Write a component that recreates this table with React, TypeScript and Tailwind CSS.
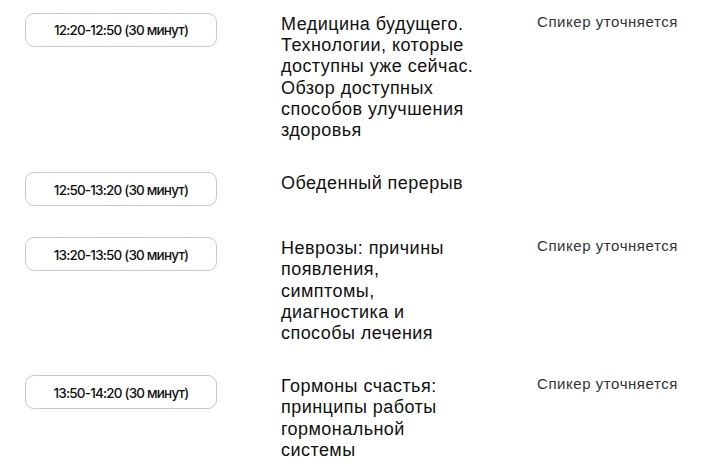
import React from "react";

type Row = { time: string; title: string; speaker?: string };

const rows: Row[] = [
  {
    time: "12:20-12:50 (30 минут)",
    title: "Медицина будущего. Технологии, которые доступны уже сейчас. Обзор доступных способов улучшения здоровья",
    speaker: "Спикер уточняется",
  },
  { time: "12:50-13:20 (30 минут)", title: "Обеденный перерыв" },
  {
    time: "13:20-13:50 (30 минут)",
    title: "Неврозы: причины появления, симптомы, диагностика и способы лечения",
    speaker: "Спикер уточняется",
  },
  {
    time: "13:50-14:20 (30 минут)",
    title: "Гормоны счастья: принципы работы гормональной системы",
    speaker: "Спикер уточняется",
  },
];

export default function App() {
  return (
    <div className="w-[719px] h-[476px] overflow-hidden bg-white pt-[13px] pl-[25px]">
      <div className="flex flex-col gap-[31px]">
        {rows.map((r) => (
          <div key={r.time} className="flex items-start">
            <div
              className="w-[192px] h-[34px] shrink-0 rounded-[9px] border border-[#c9c9c9] flex items-center justify-center text-[13.5px] font-medium tracking-[-0.06em] text-[#111] pt-px"
              style={{ fontFamily: "Inter, 'Noto Sans', sans-serif" }}
            >
              {r.time}
            </div>
            <div className="ml-[64px] w-[256px] shrink-0">
              <div
                className="w-[194px] text-[18px] leading-[21.2px] tracking-[0.45px] text-[#111] pt-px"
                style={{ fontFamily: "'Liberation Sans', Arial, sans-serif" }}
              >
                {r.title}
              </div>
            </div>
            {r.speaker && (
              <div
                className="text-[15px] leading-[15px] tracking-[0.55px] text-[#333] pt-px"
                style={{ fontFamily: "'Liberation Sans', Arial, sans-serif" }}
              >
                {r.speaker}
              </div>
            )}
          </div>
        ))}
      </div>
    </div>
  );
}
